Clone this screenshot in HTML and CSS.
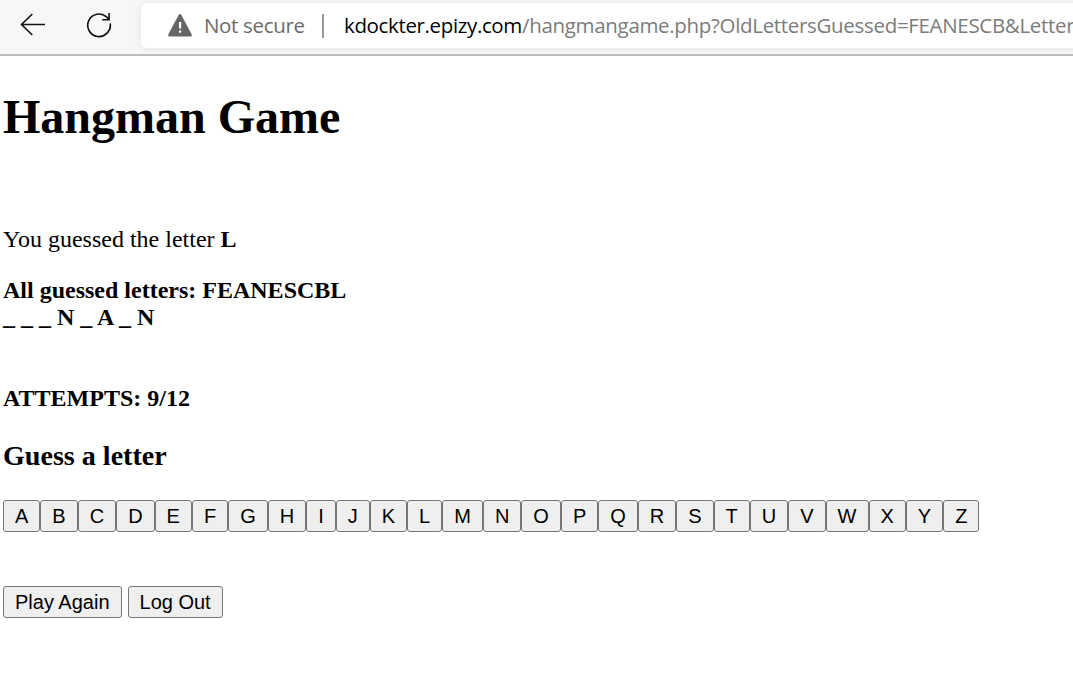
FILE: index.html
```html
<!DOCTYPE html>
<html lang="en">
<head>
<meta charset="utf-8">
<title>Hangman Game</title>
<link rel="stylesheet" href="styles.css">
</head>
<body>
<header class="toolbar">
  <svg class="back" width="26" height="24" viewBox="0 0 26 24" fill="none" stroke="#111" stroke-width="1.6"><path d="M25 11.5H1.5M12.3 1L1.5 11.5L12.3 22"/></svg>
  <svg class="reload" width="26" height="26" viewBox="0 0 26 26" fill="none" stroke="#111" stroke-width="1.6"><path d="M24.2 11.5A11.3 11.3 0 1 1 20.5 4.8L23 7.5M23.1 1V7.7H16.2"/></svg>
  <div class="address">
    <svg class="warning" width="24" height="23" viewBox="0 0 24 23"><path d="M10.6 1Q12 -.8 13.4 1L23.5 20Q24.4 22.5 22 22.5H2Q-.4 22.5.5 20Z" fill="#666"/><path d="M11 8h2.2v6.6H11zM11 16.5h2.2v2.2H11z" fill="#fff"/></svg>
    <span class="security">Not secure</span>
    <span class="divider"></span>
    <span class="url"><span class="domain">kdockter.epizy.com</span><span class="path">/hangmangame.php?OldLettersGuessed=FEANESCB&amp;Letter</span></span>
  </div>
</header>
<main class="page">
  <h1 class="title">Hangman Game</h1>
  <p class="guess">You guessed the letter <b>L</b></p>
  <p class="status">All guessed letters: FEANESCBL<br>_ _ _ N _ A _ N<br><br><br>ATTEMPTS: 9/12</p>
  <h3 class="prompt">Guess a letter</h3>
  <div class="letters">
    <button class="btn">A</button><button class="btn">B</button><button class="btn">C</button><button class="btn">D</button><button class="btn">E</button><button class="btn">F</button><button class="btn">G</button><button class="btn">H</button><button class="btn">I</button><button class="btn">J</button><button class="btn">K</button><button class="btn">L</button><button class="btn">M</button><button class="btn">N</button><button class="btn">O</button><button class="btn">P</button><button class="btn">Q</button><button class="btn">R</button><button class="btn">S</button><button class="btn">T</button><button class="btn">U</button><button class="btn">V</button><button class="btn">W</button><button class="btn">X</button><button class="btn">Y</button><button class="btn">Z</button>
  </div>
  <div class="actions"><button class="btn">Play Again</button><button class="btn">Log Out</button></div>
</main>
</body>
</html>
```
FILE: styles.css
```css
* { box-sizing: border-box; }
body { margin: 0; background: #fff; color: #000; overflow: hidden; font: 24px/27px "Liberation Serif", "Times New Roman", serif; }
.toolbar { display: flex; align-items: center; height: 56px; padding: 0 0 4px 20px; background: #f7f7f7; border-bottom: 2px solid #bdbdbd; overflow: hidden; }
.back, .reload, .warning { flex: none; display: block; }
.reload { margin-left: 40px; }
.address { display: flex; align-items: center; flex: none; width: 940px; height: 45px; margin: 1px 0 0 29px; padding-left: 27px; background: #fff; border-radius: 6px; box-shadow: 0 0 8px rgba(0, 0, 0, .09); font: 20.5px/30px "Open Sans", "Noto Sans", sans-serif; white-space: nowrap; }
.security, .url { padding-bottom: 2px; }
.security { width: 101px; margin-left: 12px; color: #6b6b6b; letter-spacing: -.33px; }
.divider { width: 2px; height: 24px; margin: 0 20px 0 17px; background: #999; }
.url { display: flex; }
.domain { width: 178px; color: #000; letter-spacing: -.36px; }
.path { color: #7b7b7b; letter-spacing: -.32px; }
.page { padding: 33px 0 0 3px; }
.title { margin: 0; font-size: 48px; line-height: 55px; }
.guess { margin: 82px 0 0; }
.status { margin: 24px 0 0; font-weight: bold; }
.prompt { margin: 28px 0 0; font-size: 28.08px; line-height: 32px; }
.letters { display: flex; margin-top: 28px; }
.actions { display: flex; gap: 6px; margin-top: 54px; }
.btn { height: 32px; padding: 0 11px; border: 1px solid #767676; border-radius: 3px; background: #efefef; color: #000; font: 20px/28px "Liberation Sans", Arial, sans-serif; }
```
